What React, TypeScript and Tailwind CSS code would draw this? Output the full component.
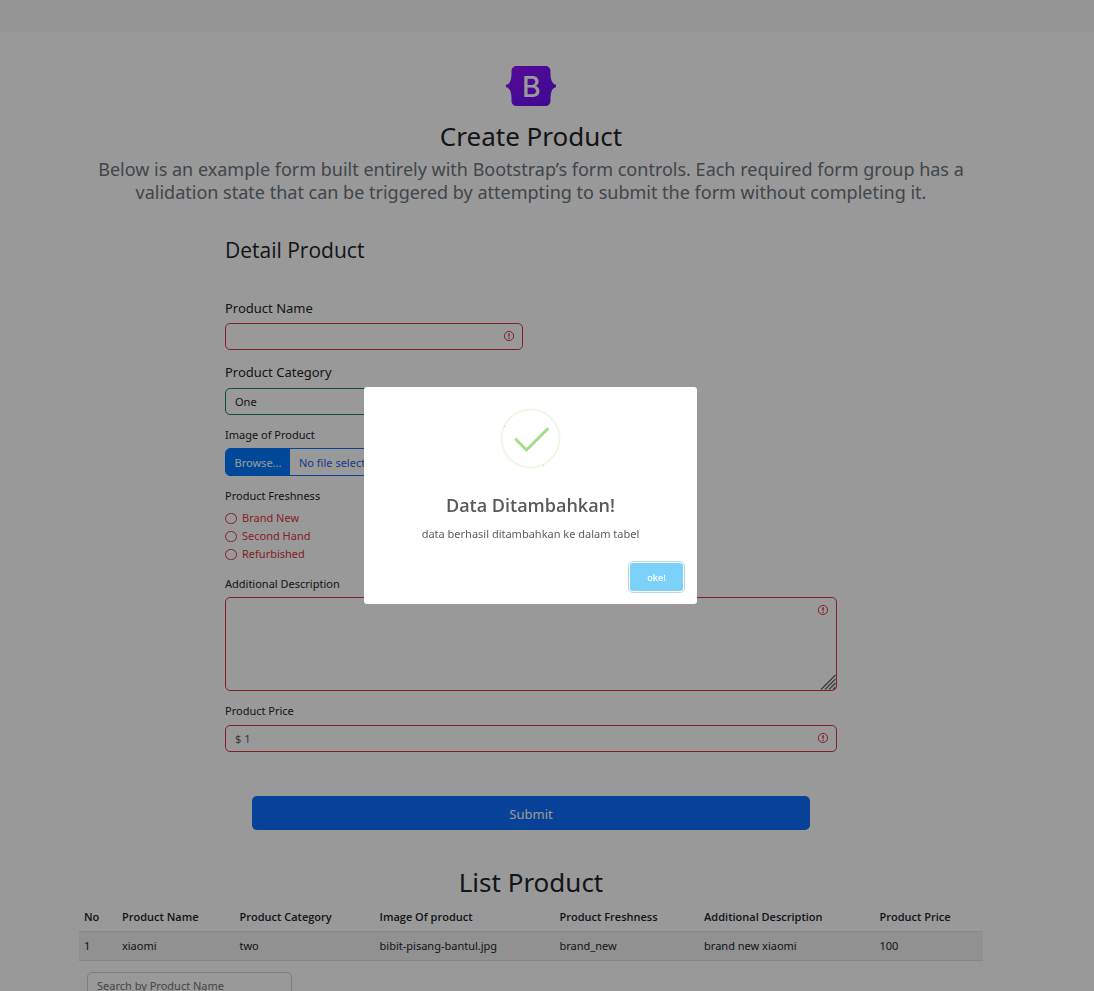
import React from 'react';

const fieldBase =
  'w-full rounded-[5px] border bg-white px-[9px] text-[11px] text-[#212529] outline-none placeholder:text-[#595c5f] placeholder:opacity-100';

function InvalidIcon({ className }: { className: string }) {
  return (
    <svg
      className={`pointer-events-none absolute right-2 size-3 ${className}`}
      viewBox="0 0 12 12"
      fill="none"
      stroke="#dc3545"
      aria-hidden="true"
    >
      <circle cx="6" cy="6" r="4.6" />
      <path d="M6 3.2v3.4" strokeWidth="1.5" />
      <circle cx="6" cy="8.2" r="0.4" />
    </svg>
  );
}

function Logo() {
  return (
    <svg className="h-10 w-[50px]" viewBox="0 0 118 94" role="img" aria-label="Bootstrap">
      <defs>
        <linearGradient id="logo-fill" x1="0" y1="0" x2="1" y2="1">
          <stop offset="0" stopColor="#9013fe" />
          <stop offset="1" stopColor="#6610f2" />
        </linearGradient>
      </defs>
      <path
        fill="url(#logo-fill)"
        d="M24.509 0c-6.733 0-11.715 5.893-11.492 12.284.214 6.14-.064 14.092-2.066 20.577C8.943 39.365 5.547 43.485 0 44.014v5.972c5.547.529 8.943 4.649 10.951 11.153 2.002 6.485 2.28 14.437 2.066 20.577C12.794 88.106 17.776 94 24.51 94H93.5c6.733 0 11.714-5.893 11.491-12.284-.214-6.14.064-14.092 2.066-20.577 2.009-6.504 5.396-10.624 10.943-11.153v-5.972c-5.547-.529-8.934-4.649-10.943-11.153-2.002-6.484-2.28-14.437-2.066-20.577C105.214 5.894 100.233 0 93.5 0z"
      />
      <text
        x="59.500"
        y="72"
        textAnchor="middle"
        fill="#fff"
        fontSize="67"
        fontWeight="500"
        fontFamily="Inter, sans-serif"
      >
        B
      </text>
    </svg>
  );
}

const freshness = ['Brand New', 'Second Hand', 'Refurbished'];

const columns = [
  { title: 'No', width: 'w-[4.2%]', value: '1' },
  { title: 'Product Name', width: 'w-[13%]', value: 'xiaomi' },
  { title: 'Product Category', width: 'w-[15.5%]', value: 'two' },
  { title: 'Image Of product', width: 'w-[19.9%]', value: 'bibit-pisang-bantul.jpg' },
  { title: 'Product Freshness', width: 'w-[16%]', value: 'brand_new' },
  { title: 'Additional Description', width: 'w-[19.4%]', value: 'brand new xiaomi' },
  { title: 'Product Price', width: 'w-[12%]', value: '100' },
];

function ProductForm() {
  return (
    <form className="mx-auto w-full max-w-[612px]" onSubmit={(e) => e.preventDefault()}>
      <h2 className="font-['Open_Sans',sans-serif] text-[21px] leading-7">Detail Product</h2>

      <div className="mt-8 w-full max-w-[298px]">
        <label htmlFor="name" className="block pt-[2px] text-[13px] leading-5">
          Product Name
        </label>
        <div className="relative mt-[5px]">
          <input id="name" type="text" className={`${fieldBase} block h-[27px] border-[#dc3545]`} />
          <InvalidIcon className="top-[7px]" />
        </div>

        <label htmlFor="category" className="mt-3 block text-[13px] leading-5">
          Product Category
        </label>
        <select
          id="category"
          defaultValue="One"
          className="mt-[6px] block h-[27px] w-full appearance-none rounded-[5px] border border-[#198754] bg-white px-[9px] pt-px text-[11px] text-[#212529]"
        >
          <option>One</option>
          <option>Two</option>
          <option>Three</option>
        </select>

        <label htmlFor="image" className="mt-3 block text-[11px] leading-4">
          Image of Product
        </label>
        <label
          htmlFor="image"
          className="mt-[5px] flex h-[28px] cursor-pointer items-stretch overflow-hidden rounded-[5px] border border-[#0d6efd] text-[11px] leading-[27px]"
        >
          <span className="w-16 bg-[#007bff] text-center text-white">Browse...</span>
          <span className="pl-[9px] text-[#2f5fe8]">No file selected.</span>
          <input id="image" type="file" className="sr-only" />
        </label>
      </div>

      <fieldset className="mt-3">
        <legend className="text-[11px] leading-4">Product Freshness</legend>
        <div className="mt-[5px]">
          {freshness.map((item) => (
            <label key={item} className="flex h-[18px] items-center gap-[5px] text-[11px] text-[#dc3545]">
              <input
                type="radio"
                name="freshness"
                className="h-[11px] w-3 appearance-none rounded-full border border-[#dc3545] bg-white"
              />
              {item}
            </label>
          ))}
        </div>
      </fieldset>

      <label htmlFor="description" className="mt-[13px] block text-[11px] leading-4">
        Additional Description
      </label>
      <div className="relative mt-[5px]">
        <textarea id="description" className={`${fieldBase} block h-[94px] resize-none border-[#dc3545]`} />
        <InvalidIcon className="top-[7px]" />
        <svg
          className="pointer-events-none absolute bottom-px right-px size-4"
          viewBox="0 0 16 16"
          stroke="#6b6b6b"
          strokeWidth="1.4"
          aria-hidden="true"
        >
          <path d="M1 15.5 15.5 1M5 15.5 15.5 5M9 15.5 15.5 9M13 15.5l2.5-2.5" />
        </svg>
      </div>

      <label htmlFor="price" className="mt-3 block text-[11px] leading-4">
        Product Price
      </label>
      <div className="relative mt-[6px]">
        <input
          id="price"
          type="text"
          placeholder="$ 1"
          className={`${fieldBase} block h-[27px] border-[#dc3545]`}
        />
        <InvalidIcon className="top-[7px]" />
      </div>

      <div className="mt-11 px-[27px]">
        <button type="submit" className="h-[34px] w-full rounded-[5px] bg-[#0d6efd] pt-[3px] text-[13px] text-white">
          Submit
        </button>
      </div>
    </form>
  );
}

function SuccessDialog() {
  return (
    <div className="fixed inset-0 flex items-center justify-center bg-black/40 pr-[33px]">
      <div
        role="dialog"
        aria-modal="true"
        aria-labelledby="dialog-title"
        className="flex w-[333px] flex-col items-center rounded-[3px] bg-white pb-[11px] pt-[21px] text-center"
      >
        <svg className="size-[62px]" viewBox="0 0 62 62" fill="none" aria-hidden="true">
          <circle cx="30.500" cy="30.5" r="29" stroke="#a5dc86" strokeOpacity="0.2" strokeWidth="2" />
          <path d="M16 31.500 26.500 42 47.500 21" stroke="#a5dc86" strokeWidth="3" strokeLinecap="round" />
          <circle cx="5" cy="18.500" r="0.6" fill="#a5dc86" />
          <circle cx="43.500" cy="57" r="0.6" fill="#a5dc86" />
        </svg>
        <h2
          id="dialog-title"
          className="mt-[23px] font-['Open_Sans',sans-serif] text-[18px] font-semibold leading-6 text-[#595959]"
        >
          Data Ditambahkan!
        </h2>
        <p className="mt-[9px] text-[11px] leading-4 text-[#5c5c5c]">data berhasil ditambahkan ke dalam tabel</p>
        <div className="mt-[19px] flex w-full justify-end pr-3">
          <div className="rounded-[5px] border border-[#b9d5e8] p-px">
            <button
              type="button"
              className="block h-7 w-[53px] rounded-[3px] bg-[#7cd1f9] pt-[2px] font-['Open_Sans',sans-serif] text-[9px] font-semibold text-white"
            >
              oke!
            </button>
          </div>
        </div>
      </div>
    </div>
  );
}

export default function App() {
  return (
    <div className="h-screen overflow-hidden bg-white font-['Noto_Sans','Open_Sans',sans-serif] text-[#212529]">
      <div className="h-8 bg-[#f8f9fa]" />
      <div className="pr-8">
        <main className="mx-auto w-full max-w-[904px]">
          <header className="flex flex-col items-center pt-[34px] text-center">
            <Logo />
            <h1 className="mt-3 text-[26px] leading-9">Create Product</h1>
            <p className="mt-1 text-[18px] leading-[23px] text-[#6c757d]">
              Below is an example form built entirely with Bootstrap’s form controls. Each required form group has a
              validation state that can be triggered by attempting to submit the form without completing it.
            </p>
          </header>

          <div className="mt-8">
            <ProductForm />
          </div>

          <section className="mt-[34px]">
            <h2 className="text-center text-[26px] leading-9">List Product</h2>
            <table className="mt-[3px] w-full table-fixed text-left text-[11px] leading-4">
              <thead className="font-['Open_Sans',sans-serif]">
                <tr className="h-7 border-b border-[#dee2e6]">
                  {columns.map((c) => (
                    <th key={c.title} className={`whitespace-nowrap px-[5px] font-semibold ${c.width}`}>
                      {c.title}
                    </th>
                  ))}
                </tr>
              </thead>
              <tbody>
                <tr className="h-[29px] border-b border-[#dee2e6] bg-[#f2f2f2]">
                  {columns.map((c) => (
                    <td key={c.title} className="whitespace-nowrap px-[5px]">
                      {c.value}
                    </td>
                  ))}
                </tr>
              </tbody>
            </table>
            <div className="px-2 pt-[11px]">
              <input
                type="search"
                aria-label="Search by Product Name"
                placeholder="Search by Product Name"
                className="block h-[27px] w-[205px] rounded-[5px] border border-[#ced4da] bg-white px-[9px] text-[11px] placeholder:text-[#6c757d] placeholder:opacity-100"
              />
            </div>
          </section>
        </main>
      </div>
      <SuccessDialog />
    </div>
  );
}
